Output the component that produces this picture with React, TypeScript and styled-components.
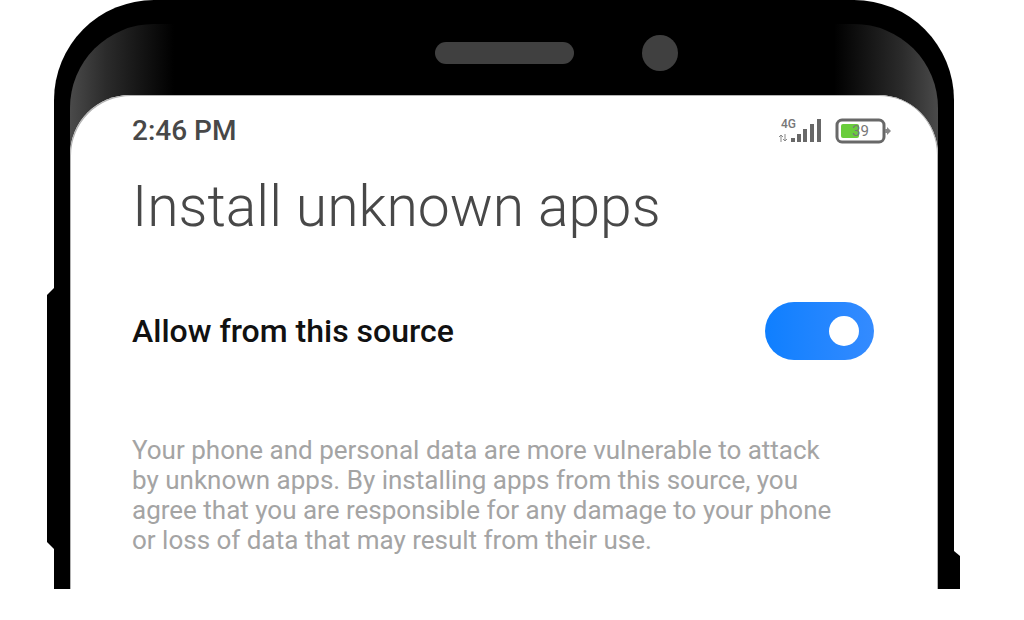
import React, { useState } from 'react';
import styled, { createGlobalStyle } from 'styled-components';

const GlobalStyle = createGlobalStyle`
  *, *::before, *::after { box-sizing: border-box; }
  body {
    margin: 0;
    background: #fff;
    font-family: Roboto, "Liberation Sans", sans-serif;
  }
`;

const Page = styled.main`
  display: flex;
  padding: 0 70px 30px 54px;
`;

const Phone = styled.div`
  position: relative;
  flex: 1;
  min-width: 0;
  padding: 24px 16px 0;
  background: #000;
  border-radius: 100px 100px 0 0;
`;

const SideKey = styled.span<{ $side: 'left' | 'right' }>`
  position: absolute;
  ${({ $side }) =>
    $side === 'left'
      ? `left: -7px; top: 288px; height: 261px; width: 8px;
         clip-path: polygon(0 7px, 7px 0, 100% 0, 100% 100%, 7px 100%, 0 254px);`
      : `right: -6px; top: 551px; bottom: 0; width: 7px;
         clip-path: polygon(0 0, 1px 0, 100% 5px, 100% 100%, 0 100%);`}
  background: #000;
`;

const Bezel = styled.div`
  border-radius: 84px 84px 0 0;
  background: linear-gradient(
    90deg,
    #4a4a4a 0,
    #2b2b2b 36px,
    #151515 70px,
    #000 104px,
    #000 calc(100% - 104px),
    #151515 calc(100% - 70px),
    #2b2b2b calc(100% - 36px),
    #4a4a4a 100%
  );
`;

const Sensors = styled.div`
  display: flex;
  justify-content: center;
  align-items: center;
  gap: 68px;
  height: 71px;
  padding: 0 0 14px 104px;
`;

const Speaker = styled.span`
  width: 139px;
  height: 22px;
  border-radius: 11px;
  background: #404040;
`;

const Camera = styled.span`
  width: 36px;
  height: 36px;
  border-radius: 50%;
  background: #404040;
`;

const Screen = styled.section`
  padding: 20px 46px 34px 62px;
  background: #fff;
  border-radius: 60px 60px 0 0;
  box-shadow: inset 1px 1px 0 #b4b4b4, inset -1px 0 0 #b4b4b4;
`;

const StatusBar = styled.div`
  display: flex;
  justify-content: space-between;
  align-items: center;
  height: 32px;
`;

const Clock = styled.time`
  font-size: 28px;
  line-height: 32px;
  font-weight: 500;
  color: #484848;
`;

const StatusIcons = styled.svg`
  display: block;
  width: 114px;
  height: 32px;
`;

const Title = styled.h1`
  margin: 24px 0 0;
  font-size: 57px;
  line-height: 72px;
  font-weight: 300;
  color: #484848;
`;

const SettingRow = styled.label`
  display: flex;
  justify-content: space-between;
  align-items: center;
  height: 60px;
  margin: 58px 18px 0 0;
  font-size: 32px;
  line-height: 36px;
  font-weight: 500;
  color: #111;
`;

const Switch = styled.input`
  appearance: none;
  flex: none;
  display: flex;
  align-items: center;
  width: 109px;
  height: 58px;
  margin: 0;
  padding: 0 15px;
  border-radius: 29px;
  background: #c8c8c8;
  cursor: pointer;

  &::before {
    content: '';
    width: 30px;
    height: 30px;
    border-radius: 50%;
    background: #fff;
  }

  &:checked {
    justify-content: flex-end;
    background: linear-gradient(90deg, #0f7fff, #348bff);
  }
`;

const Notice = styled.p`
  margin: 74px 0 0;
  font-size: 26px;
  line-height: 30px;
  color: #a4a4a4;
`;

const Line = styled.span`
  display: block;
`;

const noticeLines = [
  'Your phone and personal data are more vulnerable to attack',
  'by unknown apps. By installing apps from this source, you',
  'agree that you are responsible for any damage to your phone',
  'or loss of data that may result from their use.',
];

const signalBars = [
  { x: 13, h: 4 },
  { x: 19, h: 8 },
  { x: 25, h: 13 },
  { x: 32, h: 18 },
  { x: 39, h: 23 },
];

export default function App() {
  const [allowed, setAllowed] = useState(true);

  return (
    <>
      <GlobalStyle />
      <Page>
        <Phone>
          <SideKey $side="left" />
          <SideKey $side="right" />
          <Bezel>
            <Sensors>
              <Speaker />
              <Camera />
            </Sensors>
            <Screen>
              <StatusBar>
                <Clock>2:46 PM</Clock>
                <StatusIcons viewBox="0 0 114 32" aria-label="4G signal, battery 39 percent">
                  <text x="3" y="13" fontSize="12" fontWeight="500" fill="#777">4G</text>
                  <path d="M3 27v-7M1 22l2-2 2 2M7 19v7M5 24l2 2 2-2" fill="none" stroke="#888" strokeWidth="1" />
                  {signalBars.map(({ x, h }) => (
                    <rect key={x} x={x} y={27 - h} width="4" height={h} fill="#686868" />
                  ))}
                  <rect x="59" y="5" width="47" height="22" rx="5" fill="#fff" stroke="#686868" strokeWidth="3" />
                  <path d="M107 14h2v-2l4 4-4 4v-2h-2z" fill="#888" />
                  <rect x="63" y="9" width="18" height="14" rx="2" fill="#69cd3b" />
                  <text x="74" y="21" fontSize="15" fill="#777">39</text>
                </StatusIcons>
              </StatusBar>
              <Title>Install unknown apps</Title>
              <SettingRow>
                Allow from this source
                <Switch
                  type="checkbox"
                  role="switch"
                  checked={allowed}
                  onChange={(event) => setAllowed(event.target.checked)}
                />
              </SettingRow>
              <Notice>
                {noticeLines.map((line) => (
                  <Line key={line}>{line} </Line>
                ))}
              </Notice>
            </Screen>
          </Bezel>
        </Phone>
      </Page>
    </>
  );
}
